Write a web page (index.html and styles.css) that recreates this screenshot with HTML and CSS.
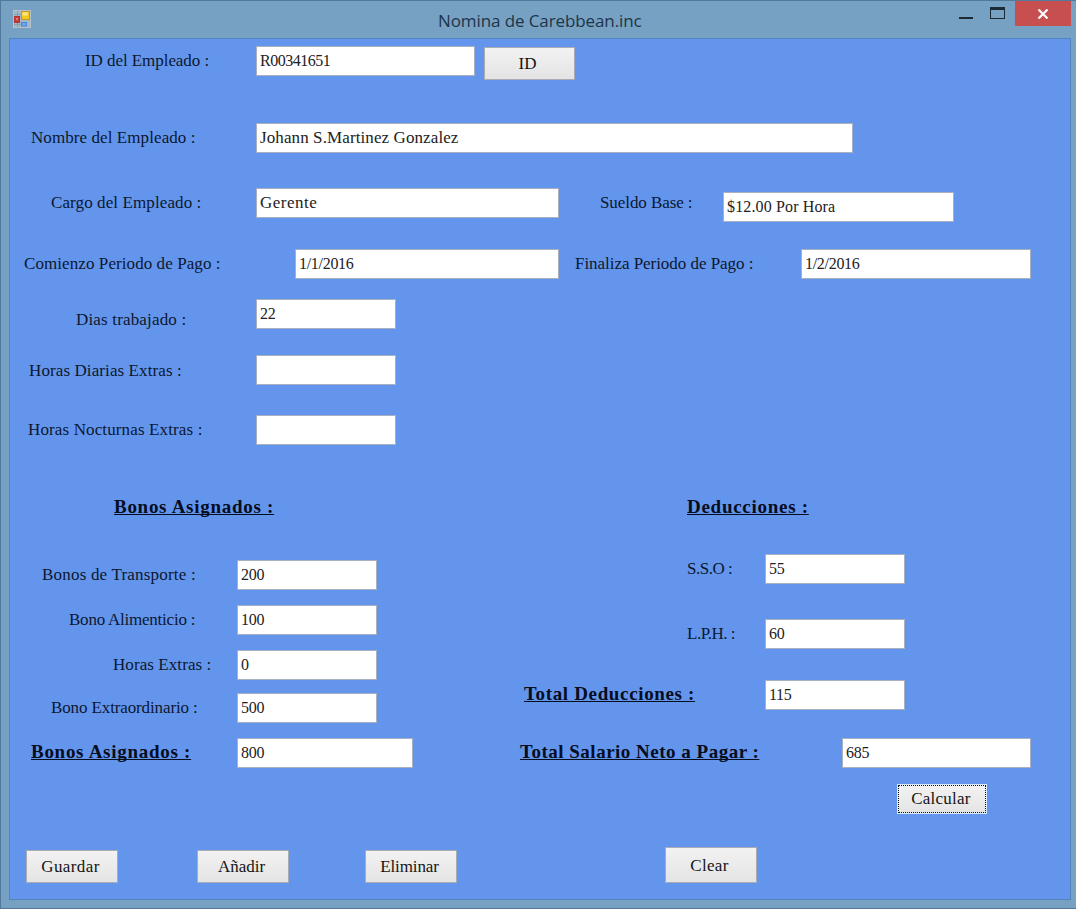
FILE: index.html
```
<!DOCTYPE html>
<html lang="es">
<head>
<meta charset="utf-8">
<title>Nomina de Carebbean.inc</title>
<link rel="stylesheet" href="styles.css">
</head>
<body>
<div class="window">
  <header class="titlebar">
    <svg class="app-icon" width="18" height="18" viewBox="0 0 18 18">
      <rect x="0.5" y="0.5" width="17" height="17" fill="#a3b7c4" stroke="#b4c1c8"/>
      <path d="M1 4.500H8M4.500 1V6M4.500 13V17M1 14.500H8" stroke="#8ba1b0" fill="none"/>
      <rect x="8.500" y="1.500" width="8" height="8" fill="#f3c81c" stroke="#c79a20"/>
      <rect x="9.500" y="2.500" width="5" height="3" fill="#fbe58a"/>
      <rect x="1.500" y="6.500" width="5" height="6" fill="#c63b38" stroke="#b03438"/>
      <rect x="3" y="8" width="2" height="2" fill="#e08078"/>
      <rect x="8.500" y="12.500" width="5" height="3.500" fill="#6aa6f2" stroke="#4c84d6"/>
    </svg>
    <h1 class="title">Nomina de Carebbean.inc</h1>
    <div class="controls">
      <svg class="min" width="14" height="3"><rect width="14" height="2" fill="#1b2a35"/></svg>
      <svg class="max" width="15" height="12"><rect x="0.5" y="0.5" width="14" height="11" fill="none" stroke="#1b2a35"/><rect width="15" height="3" fill="#1b2a35"/></svg>
      <div class="close"><svg width="12" height="10" viewBox="0 0 12 10"><path d="M1.500 0.500L10.500 9.500M10.500 0.500L1.500 9.500" stroke="#fff" stroke-width="2.200"/></svg></div>
    </div>
  </header>
  <main class="form">
    <div class="row row-id"><label class="label l-id">ID del Empleado :</label><div class="field f-id">R00341651</div><button class="btn b-id">ID</button></div>
    <div class="row row-name"><label class="label l-name">Nombre del Empleado :</label><div class="field f-name">Johann S.Martinez Gonzalez</div></div>
    <div class="row row-job"><label class="label l-job">Cargo del Empleado :</label><div class="field f-job">Gerente</div><label class="label l-base">Sueldo Base :</label><div class="field f-base">$12.00 Por Hora</div></div>
    <div class="row row-dates"><label class="label l-start">Comienzo Periodo de Pago :</label><div class="field f-start">1/1/2016</div><label class="label l-end">Finaliza Periodo de Pago :</label><div class="field f-end">1/2/2016</div></div>
    <div class="row row-days"><label class="label l-days">Dias trabajado :</label><div class="field">22</div></div>
    <div class="row row-day-extra"><label class="label l-dayx">Horas Diarias Extras :</label><div class="field"></div></div>
    <div class="row row-night-extra"><label class="label l-nightx">Horas Nocturnas Extras :</label><div class="field"></div></div>
    <div class="sections">
      <section class="bonuses">
        <h2 class="heading h-bonus">Bonos Asignados :</h2>
        <div class="row r-transport"><label class="label l-transport">Bonos de Transporte :</label><div class="field">200</div></div>
        <div class="row r-food"><label class="label l-food">Bono Alimenticio :</label><div class="field">100</div></div>
        <div class="row r-food"><label class="label l-hours">Horas Extras :</label><div class="field">0</div></div>
        <div class="row r-special"><label class="label l-special">Bono Extraordinario :</label><div class="field">500</div></div>
        <div class="row r-food"><label class="label bold l-bonus-total">Bonos Asignados :</label><div class="field f-bonus-total">800</div></div>
      </section>
      <section class="deductions">
        <h2 class="heading h-ded">Deducciones :</h2>
        <div class="row r-sso"><label class="label l-sso">S.S.O :</label><div class="field">55</div></div>
        <div class="row r-lph"><label class="label l-lph">L.P.H. :</label><div class="field">60</div></div>
        <div class="row r-ded"><label class="label bold l-ded">Total Deducciones :</label><div class="field">115</div></div>
        <div class="row r-net"><label class="label bold l-net">Total Salario Neto a Pagar :</label><div class="field f-net">685</div></div>
        <button class="btn b-calc">Calcular</button>
      </section>
    </div>
    <footer class="actions">
      <button class="btn b-save">Guardar</button>
      <button class="btn b-add">Añadir</button>
      <button class="btn b-del">Eliminar</button>
      <button class="btn b-clear">Clear</button>
    </footer>
  </main>
</div>
</body>
</html>
```
FILE: styles.css
```
* { box-sizing: border-box; }
body { margin: 0; font-family: "Liberation Serif", serif; color: #0b1830; }
.window {
  width: 1076px; height: 909px; padding: 0 5px 8px 8px; overflow: hidden;
  display: flex; flex-direction: column;
  background: #77a1c3;
  border: solid #52799c; border-width: 1px 0 1px 1px;
}
.titlebar { height: 37px; flex: none; display: flex; align-items: flex-start; }
.app-icon { margin: 9px 0 0 4px; }
.title {
  margin: 7px 0 0 407px; width: 220px; white-space: nowrap;
  font: 400 17px/25px "Open Sans", sans-serif; letter-spacing: -0.1px; color: #1d3549;
}
.controls { margin-left: auto; display: flex; align-items: flex-start; }
.min { margin: 16px 17px 0 0; }
.max { margin: 6px 10px 0 0; }
.close { width: 56px; height: 25px; background: #c84f50; display: flex; align-items: center; justify-content: center; }

/* Client area */
.form { width: 1062px; height: 862px; background: #6495ed; border: 1px solid #5584bd; }
.row { display: flex; align-items: flex-start; height: 30px; }
.label { flex: none; font-size: 17px; line-height: 30px; white-space: nowrap; }
.field {
  flex: none; width: 140px; height: 30px; padding-left: 3px;
  border: 1px solid #a9b0c2; background: #fff; color: #222;
  font-size: 16px; line-height: 28px; letter-spacing: -0.3px; white-space: nowrap;
}
.btn {
  flex: none; width: 91px; height: 33px; padding: 0; border: 1px solid #a9acb5;
  background: linear-gradient(#f2f2f2, #e4e4e4); color: #151515;
  font: 17px/29px "Liberation Serif", serif;
}
.heading, .bold { font-weight: 700; font-size: 19px; text-decoration: underline; text-decoration-skip-ink: none; white-space: nowrap; color: #050d1e; }
.heading { margin: 0; line-height: 24px; letter-spacing: 0.72px; }
.bold { line-height: 28px; }

.row-id { margin-top: 7px; padding-left: 75px; }
.l-id { width: 171px; letter-spacing: -0.06px; }
.f-id { width: 219px; letter-spacing: -0.5px; }
.b-id { margin: 1px 0 0 9px; padding-right: 4px; }
.row-name { margin-top: 47px; padding-left: 21px; }
.l-name { width: 225px; letter-spacing: 0.08px; }
.f-name { width: 597px; font-size: 17px; letter-spacing: 0.1px; }
.row-job { margin-top: 35px; padding-left: 41px; }
.l-job { width: 205px; letter-spacing: 0.1px; }
.f-job { width: 303px; font-size: 17px; letter-spacing: 0.5px; }
.l-base { margin-left: 41px; width: 123px; letter-spacing: -0.08px; }
.f-base { width: 231px; margin-top: 4px; letter-spacing: 0.14px; }
.row-dates { margin-top: 31px; padding-left: 14px; }
.l-start { width: 271px; letter-spacing: 0.08px; }
.f-start { width: 264px; }
.l-end { margin-left: 16px; width: 226px; letter-spacing: -0.04px; }
.f-end { width: 230px; }
.row-days { margin-top: 20px; padding-left: 66px; }
.l-days { width: 180px; margin-top: 6px; letter-spacing: 0.17px; }
.row-day-extra { margin-top: 26px; padding-left: 19px; }
.l-dayx { width: 227px; margin-top: 1px; letter-spacing: 0.1px; }
.row-night-extra { margin-top: 30px; padding-left: 18px; }
.l-nightx { width: 228px; letter-spacing: 0.13px; }

/* Bonuses and deductions side by side */
.sections { display: flex; height: 370px; margin-top: 50px; }
.bonuses { width: 490px; }
.deductions { width: 570px; }
.h-bonus { padding-left: 104px; }
.r-transport { margin-top: 41px; padding-left: 32px; }
.l-transport { width: 195px; letter-spacing: 0.2px; }
.r-food { margin-top: 15px; }
.l-food { margin-left: 59px; width: 168px; letter-spacing: -0.23px; }
.l-hours { margin-left: 103px; width: 124px; letter-spacing: 0.08px; }
.r-special { margin-top: 13px; padding-left: 41px; }
.l-special { width: 186px; letter-spacing: -0.12px; }
.l-bonus-total { margin-left: 21px; width: 206px; letter-spacing: 0.72px; }
.f-bonus-total { width: 176px; }
.h-ded { padding-left: 187px; }
.r-sso { margin-top: 35px; padding-left: 187px; }
.l-sso, .l-lph { width: 78px; letter-spacing: -0.5px; }
.r-lph { margin-top: 35px; padding-left: 187px; }
.r-ded { margin-top: 31px; padding-left: 24px; }
.l-ded { width: 241px; letter-spacing: 0.65px; }
.r-net { margin-top: 28px; padding-left: 20px; }
.l-net { width: 322px; letter-spacing: 0.5px; }
.f-net { width: 189px; }
.b-calc {
  display: block; margin: 16px 0 0 397px; width: 90px; height: 30px; line-height: 26px; padding-right: 2px; letter-spacing: 0.25px;
  border: 1px solid #d8ecfc; outline: 1px dotted #111; outline-offset: -2px;
}

.actions { display: flex; align-items: flex-start; padding-left: 16px; margin-top: -18px; }
.b-save { margin-top: 3px; width: 92px; padding-right: 3px; letter-spacing: 0.4px; }
.b-add { margin: 3px 0 0 79px; width: 92px; padding-right: 3px; }
.b-del { margin: 3px 0 0 76px; width: 92px; padding-right: 3px; letter-spacing: -0.1px; }
.b-clear { margin-left: 208px; width: 92px; height: 36px; padding-right: 3px; letter-spacing: 0.3px; }
```
